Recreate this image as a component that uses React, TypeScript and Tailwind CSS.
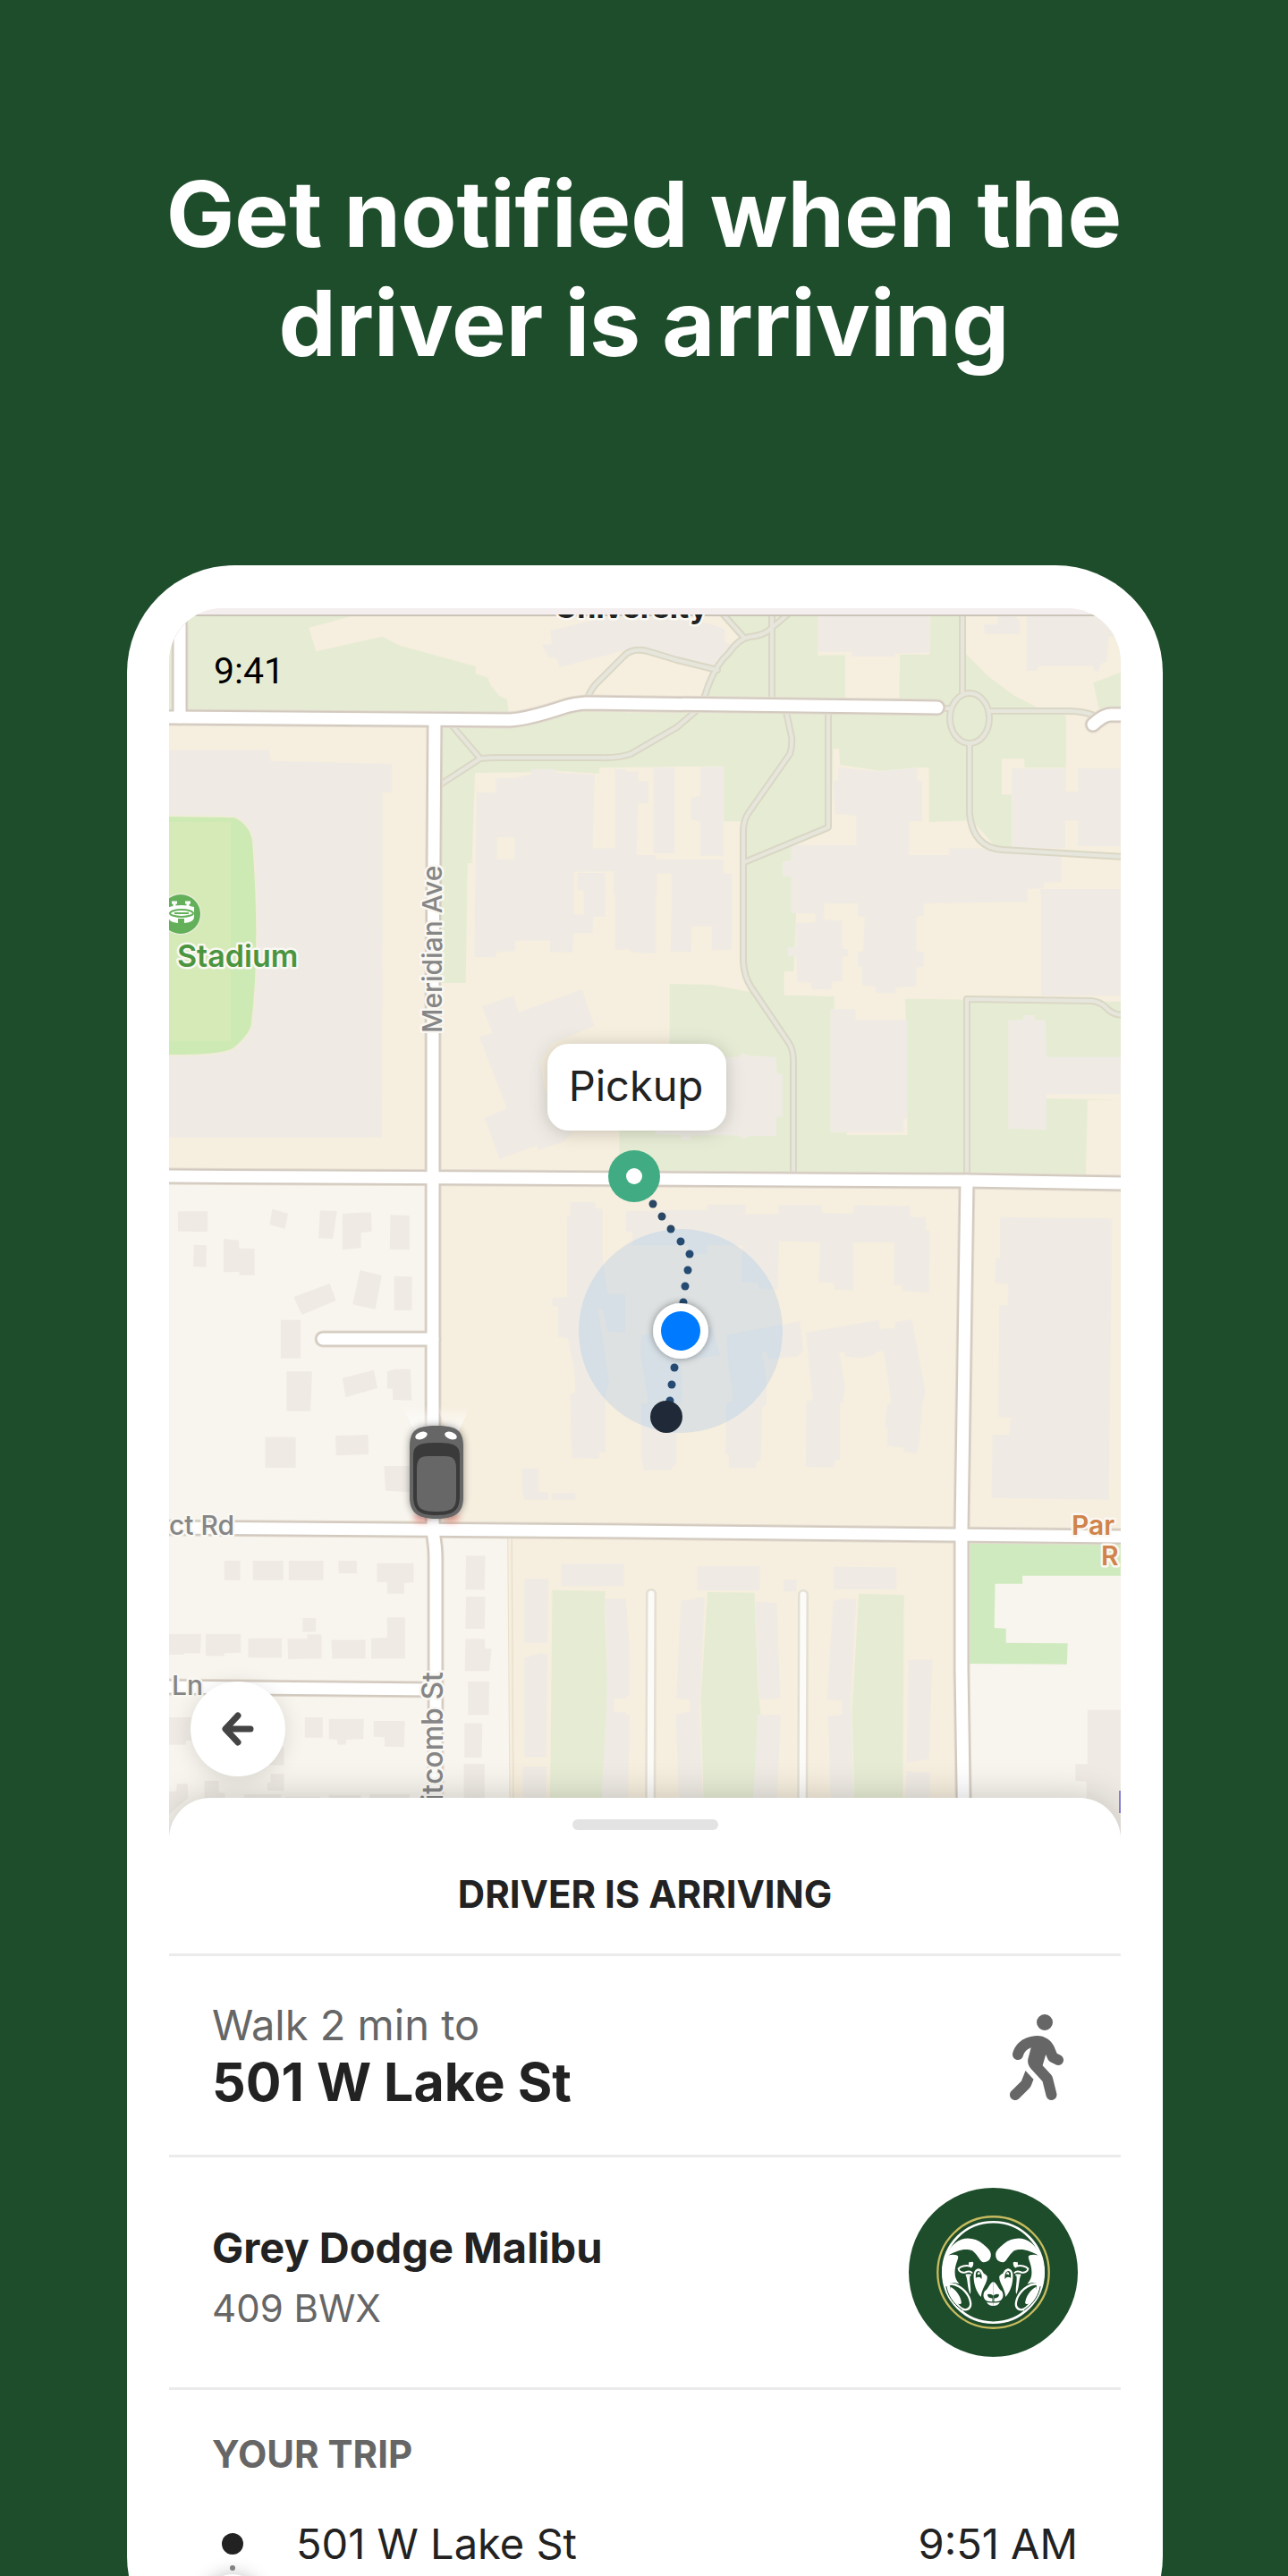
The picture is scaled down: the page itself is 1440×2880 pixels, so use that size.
import React from 'react';
import { FaPersonWalking } from 'react-icons/fa6';

const SAND = '#f6eede';
const GRASS = '#e6ecd4';
const BUILDING = '#efebe4';
const HOUSING = '#f8f5ee';
const FIELD = '#cdeab5';

interface TileProps {
  x: number;
  y: number;
  width: number;
  shapes: [string, string[]][];
}

// One map tile: 380 units high, its polygons live on a 1568x1140 grid
const Tile: React.FC<TileProps> = ({ x, y, width, shapes }) => (
  <svg x={x} y={y} width={width} height={380} viewBox="0 0 1568 1140" preserveAspectRatio="none">
    {shapes.map(([fill, list], i) => (
      <g key={i} fill={fill}>
        {list.map(points => <polygon key={points} points={points} />)}
      </g>
    ))}
  </svg>
);

const tiles: TileProps[] = [
  {
    x: 140, y: 630, width: 560,
    shapes: [
      [SAND, ['0,0 1568,0 1568,1140 0,1140']],
      [GRASS, [
        '137,170 730,170 575,215 597,295 805,245 860,275 1097,345 1097,370 1135,383 1145,410 1172,445 1195,455 1203,520 137,520',
        '990,520 1210,548 1430,480 1568,480 1568,685 1485,685 1483,705 1350,695 1270,700 1095,702 1085,1005 1072,1005 1068,1140 990,1140',
      ]],
      [BUILDING, [
        '1330,225 1568,165 1568,290 1360,348 1350,318 1325,315 1305,272 1335,270',
        '137,625 450,625 455,662 835,672 835,768 805,768 805,1140 137,1140',
        '1160,720 1215,720 1270,708 1272,690 1345,690 1350,702 1470,708 1463,955 1533,955 1533,690 1568,690 1568,1140 1095,1140 1100,768 1160,768',
      ]],
      [SAND, [
        '1163,918 1220,920 1218,992 1163,992',
        '1405,1035 1530,1032 1530,1140 1502,1140 1502,1038 1415,1038 1415,1095 1435,1097 1435,1140 1405,1140',
      ]],
    ],
  },
  {
    x: 700, y: 630, width: 600,
    shapes: [
      [SAND, ['0,0 1568,0 1568,1140 0,1140']],
      [GRASS, [
        '275,170 990,170 990,300 1060,380 1130,440 1205,485 1285,510 1285,685 1165,685 1163,655 1097,655 1097,775 1127,775 1127,955 1080,950 1010,862 885,867 885,685 850,685 740,695 625,675 622,622 605,622 600,885 483,945 485,1140 350,1140 345,865 285,865 285,680 0,683 0,500 210,500 230,450 270,350 345,260',
        '1365,400 1445,365 1445,487 1382,487',
      ]],
      [SAND, ['640,300 800,300 798,455 640,455', '560,170 888,170 886,305 560,308']],
      [BUILDING, [
        '560,170 890,170 888,298 785,303 785,312 660,312 658,296 560,296',
        '0,165 240,200 288,220 288,265 308,272 265,348 50,290 0,290',
        '1045,205 1085,205 1085,170 1130,170 1150,190 1150,237 1048,237',
        '1170,170 1445,170 1445,245 1410,245 1405,330 1388,335 1380,362 1365,360 1365,345 1205,345 1200,360 1170,360',
        '620,685 740,697 850,685 850,728 865,730 865,865 827,865 827,978 943,978 945,955 1040,955 1100,965 1272,975 1272,1068 1220,1070 1220,1088 1172,1092 1172,1140 483,1140 483,1050 457,1050 457,1000 483,995 483,945 672,945 672,845 610,840 605,730 620,727',
        '1127,687 1285,687 1285,765 1320,765 1320,687 1445,687 1445,948 1320,948 1320,863 1283,863 1283,955 1127,955',
        '1210,1092 1445,1092 1445,1140 1210,1140',
        '0,698 35,698 35,730 65,730 65,805 35,805 30,978 85,978 90,993 285,993 285,1038 310,1042 310,1140 133,1140 133,1040 90,1040 90,1140 0,1140',
        '80,685 142,685 142,972 80,972',
        '217,682 285,682 285,980 217,980 217,865 190,860 190,785 217,780',
      ]],
    ],
  },
  {
    x: 140, y: 1000, width: 560,
    shapes: [
      [SAND, ['0,0 1568,0 1568,1140 0,1140']],
      [HOUSING, ['137,955 960,955 960,1140 137,1140']],
      [GRASS, ['990,0 1070,0 1066,297 990,297', '1547,780 1568,780 1568,940 1547,940']],
      [BUILDING, [
        '137,0 805,0 803,815 137,815',
        '1095,0 1405,0 1405,65 1435,68 1435,0 1502,0 1502,75 1465,75 1463,130 1405,130 1400,195 1330,193 1330,155 1220,155 1220,190 1160,195 1160,212 1093,210',
        '1533,0 1568,0 1568,185 1533,185',
        '1117,375 1215,340 1232,395 1430,318 1468,440 1335,500 1300,560 1310,640 1330,700 1400,800 1370,830 1295,857 1288,842 1172,887 1125,750 1195,717 1108,477 1150,465',
      ]],
    ],
  },
  {
    x: 700, y: 1000, width: 600,
    shapes: [
      [SAND, ['0,0 1568,0 1568,1140 0,1140']],
      [GRASS, [
        '127,300 250,303 365,328 345,240 350,0 485,0 497,60 490,257 462,257 462,338 608,342 608,420 818,420 815,350 1445,360 1445,690 1348,690 1343,950 0,950 0,780 127,780',
      ]],
      [SAND, ['645,780 822,745 822,807 645,807', '1228,640 1445,640 1445,690 1228,684']],
      [BUILDING, [
        '0,0 87,0 87,198 20,195 0,180',
        '133,0 310,0 308,185 250,187 250,107 192,107 190,192 130,192',
        '483,0 1172,0 1172,25 870,30 870,72 848,75 848,190 870,193 870,242 848,245 848,308 790,312 785,332 730,330 728,308 690,305 690,243 677,240 677,193 693,190 697,75 677,72 677,30 580,30 578,85 630,88 632,180 648,185 648,207 632,210 632,290 602,293 600,318 543,318 540,297 500,293 497,207 472,205 472,178 497,178 497,95 553,92 553,65 483,62',
        '1213,0 1445,0 1445,340 1213,340',
        '597,385 670,385 670,420 822,420 822,750 810,755 810,797 597,797',
        '1117,422 1160,420 1160,405 1193,405 1193,420 1225,422 1228,545 1445,545 1445,668 1228,670 1228,790 1117,785',
        '85,545 330,545 335,533 360,540 438,545 440,600 457,603 457,745 438,748 438,810 360,810 345,820 328,808 190,808 185,823 160,820 160,808 85,805',
      ]],
    ],
  },
  {
    x: 140, y: 1330, width: 560,
    shapes: [
      [SAND, ['0,0 1568,0 1568,1140 0,1140']],
      [HOUSING, ['137,0 960,0 960,1140 137,1140']],
      [BUILDING, [
        '165,73 258,73 258,142 165,140', '460,65 510,80 500,132 452,118', '610,70 663,72 650,165 605,163',
        '680,80 770,76 772,140 738,145 738,195 680,202', '830,85 890,87 890,202 828,200', '215,185 255,187 253,260 213,258',
        '308,165 355,170 357,197 405,198 405,287 357,287 357,275 308,277', '735,270 803,288 783,402 712,385',
        '842,290 898,292 897,405 842,405', '527,360 640,315 660,372 553,420', '487,437 549,437 549,566 487,566',
        '505,610 585,610 580,743 505,743', '680,632 778,605 790,665 690,697',
        '820,610 845,602 893,602 897,707 838,705 838,668 820,668', '438,830 534,830 534,933 438,933',
        '658,826 760,822 762,888 660,892', '810,927 890,927 890,1015 815,1010',
        '1393,42 1470,42 1472,62 1495,65 1495,250 1510,350 1565,350 1565,480 1510,475 1495,400 1480,400 1515,650 1503,685 1503,880 1485,883 1482,903 1397,900 1393,685 1410,680 1405,600 1385,497 1355,495 1355,393 1337,390 1337,362 1383,360 1383,90 1393,88',
        '1243,935 1293,935 1293,1012 1325,1018 1325,1040 1250,1040 1243,1010', '1335,1018 1410,1018 1410,1040 1335,1040',
      ]],
    ],
  },
  {
    x: 700, y: 1330, width: 600,
    shapes: [
      [SAND, ['0,0 1568,0 1568,1140 0,1140']],
      [BUILDING, [
        '0,72 237,68 237,50 350,50 350,82 445,82 445,52 572,52 572,78 663,80 667,52 830,55 830,92 875,92 877,135 887,138 885,345 807,340 807,322 782,320 783,178 663,178 663,338 610,335 607,313 563,310 567,177 447,173 443,335 387,332 385,312 337,310 340,188 237,185 235,217 185,215 180,187 20,187 18,140 0,140',
        '45,490 100,475 250,460 275,555 160,575 165,665 160,720 148,725 147,918 130,940 52,942 45,900 45,720 65,715 42,550',
        '293,487 508,442 518,540 498,560 418,570 410,545 397,545 410,640 410,720 398,730 393,910 380,915 378,935 300,933 300,890 290,885 293,715 313,710 300,600',
        '525,480 738,437 742,468 783,465 787,445 835,435 875,680 865,720 857,850 848,885 812,880 810,865 762,860 765,800 755,795 763,720 775,715 752,540 730,545 727,555 680,565 640,558 638,543 623,545 640,660 633,715 625,718 625,905 610,910 605,932 525,930 527,710 545,705',
        '1093,92 1420,97 1410,1040 1068,1035 1070,822 1120,822 1123,765 1088,763 1090,388 1115,388 1117,317 1078,313 1080,230 1093,228',
      ]],
    ],
  },
  {
    x: 140, y: 1700, width: 560,
    shapes: [
      [SAND, ['0,0 1568,0 1568,1140 0,1140']],
      [HOUSING, ['137,30 1206,30 1212,1140 137,1140']],
      ['#e9dfcd', ['1196,50 1212,50 1218,1140 1204,1140']],
      [SAND, ['1199,50 1208,50 1214,1140 1207,1140']],
      [GRASS, ['1337,233 1502,237 1500,300 1510,550 1490,1140 1328,1140']],
      [BUILDING, [
        '310,135 360,135 360,200 310,200', '400,135 495,135 495,200 400,200', '512,135 620,135 620,200 512,200',
        '668,135 725,135 725,177 668,177', '788,143 903,143 903,207 873,210 873,245 820,245 820,207 788,207',
        '555,327 597,327 597,373 555,373', '820,325 876,325 876,463 770,463 770,395 820,392',
        '137,380 238,380 235,445 185,445 185,450 137,450', '252,380 362,380 362,443 310,445 310,455 252,453',
        '385,395 490,395 490,460 385,460', '508,397 570,397 570,382 615,382 615,463 510,465',
        '645,400 752,400 752,463 648,463', '562,660 618,660 618,728 562,728',
        '638,665 747,665 745,733 692,735 690,752 665,752 663,735 638,733', '778,672 875,672 873,760 812,758 812,727 778,725',
        '137,660 240,660 240,738 190,738 190,752 137,752', '450,760 497,760 497,820 450,820', '455,850 497,850 497,907 445,905 445,880 455,878',
        '137,908 160,908 162,883 195,883 197,930 137,985', '248,873 293,873 293,910 312,915 312,960 248,960',
        '372,918 488,918 488,960 372,960', '500,926 610,926 610,960 500,960', '638,920 738,920 738,960 638,960', '765,918 890,918 890,960 765,960',
        '1067,118 1127,118 1125,232 1065,232', '1067,255 1127,255 1125,363 1065,363', '1065,397 1125,397 1127,430 1147,430 1140,505 1063,505',
        '1073,540 1140,540 1138,652 1073,652', '1062,680 1118,680 1116,795 1062,795', '1060,817 1125,817 1125,960 1060,960',
        '1365,145 1562,145 1562,220 1365,220', '1250,195 1325,195 1322,410 1250,410', '1250,460 1300,445 1322,450 1318,795 1250,795',
        '1245,825 1318,825 1318,960 1245,960', '1500,262 1568,262 1568,960 1490,960 1508,600 1508,440',
      ]],
      [SAND, ['1530,597 1568,597 1568,643 1530,643']],
    ],
  },
  {
    x: 700, y: 1700, width: 600,
    shapes: [
      [SAND, ['0,0 1568,0 1568,1140 0,1140']],
      [HOUSING, ['980,50 1568,50 1568,1140 985,1140']],
      [GRASS, ['238,240 375,242 385,560 393,650 368,960 227,960 218,600', '680,245 812,250 808,960 668,960 660,640']],
      [BUILDING, [
        '208,152 392,152 390,235 208,235', '607,155 790,157 790,232 607,230', '460,198 498,198 498,238 460,238',
        '160,268 200,265 203,258 230,258 222,450 215,650 225,960 155,960 145,650 188,640 185,600 147,597', '378,272 440,275 450,597 388,600',
        '385,652 452,652 440,960 370,960', '605,270 635,262 672,265 657,600 665,960 598,960 590,655 630,650 630,605 587,600',
        '825,467 895,467 885,800 820,812', '820,840 888,845 888,960 815,960', '0,265 8,400 10,590 0,590', '0,650 10,650 5,960 0,960',
        '1348,635 1445,635 1445,1140 1348,1140 1345,875 1313,873 1313,817 1348,817',
      ]],
      ['#d0eabf', [
        '990,70 1445,78 1445,185 1158,185 1158,212 1078,212 1076,360 1110,362 1110,410 1290,412 1288,482 990,480',
      ]],
    ],
  },
];

const footpaths = [
  'M506 812L537 848M494 876L537 848Q548 847 560 847H670Q690 848 705 843L757 813L778 795L788 778Q798 745 815 730Q826 714 838 712Q850 711 858 706L884 684',
  'M806 684L832 713',
  'M863 684V784',
  'M657 780Q662 768 669 762L697 734Q706 724 724 728L757 738L802 749',
  'M879 796L885 824Q886 834 883 843L836 910Q831 918 831 930V1075Q832 1092 840 1104L882 1166Q887 1174 887 1186V1312',
  'M926 796V925L832 964',
  'M1076 684V775M1050 792H1062M1107 795H1195Q1212 795 1226 801',
  'M1084 832V910Q1088 948 1121 950L1256 958',
  'M1081 1314V1117L1220 1119Q1230 1120 1236 1126Q1244 1135 1256 1135',
];

const streets = [
  'M201 680V802',
  'M180 802L570 805Q590 804 632 790Q642 787 655 786L1048 791',
  'M486 805L484 1100V1712Q487 1730 487 1742V2060',
  'M180 1315L1081 1320L1260 1323',
  'M1081 1320L1075 1710V1867L1078 2060',
  'M361 1497H484',
  'M180 1708L700 1712L1260 1718',
  'M180 1886L484 1889',
  'M1222 810Q1234 799 1242 799H1260',
];

const lanes = ['M728 1782L727 2060', 'M898 1783L897 2060'];

const walkDots = [
  [730, 1346], [740, 1360], [750, 1374], [761, 1388], [771, 1402], [769, 1420],
  [766, 1438], [764, 1456], [754, 1529], [751, 1548], [749, 1566],
];

const Strokes: React.FC<{ paths: string[]; color: string; width: number }> = ({ paths, color, width }) => (
  <g fill="none" stroke={color} strokeWidth={width} strokeLinecap="round" strokeLinejoin="round">
    {paths.map(d => <path key={d} d={d} />)}
  </g>
);

const Car: React.FC = () => (
  <g>
    <path d="M449 1571L464 1601L476 1597L487 1571Z" fill="url(#beam)" />
    <path d="M527 1571L512 1601L498 1597L488 1571Z" fill="url(#beam)" />
    <g filter="url(#glow)" fill="#f0625a" opacity="0.4">
      <ellipse cx="471" cy="1697" rx="9" ry="6" />
      <ellipse cx="505" cy="1697" rx="9" ry="6" />
    </g>
    <path d="M458 1618C458 1600 464 1594 488 1594S518 1600 518 1618V1674C518 1692 508 1698 488 1698S458 1692 458 1674Z" fill="#666" filter="url(#carShadow)" />
    <path d="M462 1628C462 1616 468 1613 488 1613S514 1616 514 1628V1672C514 1690 506 1694 488 1694S462 1690 462 1672Z" fill="#3a3a3a" />
    <path d="M466 1642C466 1631 470 1628 478 1628H498C506 1628 510 1631 510 1642V1674C510 1687 504 1690 488 1690S466 1687 466 1674Z" fill="#676767" />
    <ellipse cx="471" cy="1605" rx="7" ry="4" transform="rotate(-20 471 1605)" fill="#fff" />
    <ellipse cx="504" cy="1605" rx="7" ry="4" transform="rotate(20 504 1605)" fill="#fff" />
  </g>
);

const CampusMap: React.FC = () => (
  <svg className="block w-full" viewBox="189 680 1064 1376" fontFamily="Inter, sans-serif" role="img" aria-label="Map">
    <defs>
      <linearGradient id="beam" x1="0" y1="1" x2="0" y2="0">
        <stop offset="0" stopColor="#fff" stopOpacity="0.9" />
        <stop offset="1" stopColor="#fff" stopOpacity="0" />
      </linearGradient>
      <filter id="glow" x="-50%" y="-100%" width="200%" height="300%"><feGaussianBlur stdDeviation="3" /></filter>
      <filter id="carShadow" x="-50%" y="-50%" width="200%" height="200%">
        <feDropShadow dx="0" dy="0" stdDeviation="4" floodOpacity="0.4" />
      </filter>
      <filter id="cardShadow" x="-50%" y="-50%" width="200%" height="200%">
        <feDropShadow dx="0" dy="2" stdDeviation="10" floodOpacity="0.2" />
      </filter>
    </defs>

    {tiles.map(tile => <Tile key={`${tile.x}-${tile.y}`} {...tile} />)}

    {/* Playing field */}
    <path d="M185 912L262 913Q280 921 283 940Q292 1060 282 1143Q282 1155 262 1172Q250 1181 185 1180Z" fill={FIELD} stroke="#f1ecd9" strokeWidth="2" />
    <path d="M185 919H258V1164H185Z" fill="#d6eab8" />

    {/* Streets */}
    <Strokes paths={footpaths} color="#dad7c5" width={8} />
    <ellipse cx="1084" cy="803" rx="22" ry="28" fill="none" stroke="#dad7c5" strokeWidth="8" />
    <Strokes paths={footpaths} color="#e7e6dc" width={4} />
    <ellipse cx="1084" cy="803" rx="22" ry="28" fill="none" stroke="#e7e6dc" strokeWidth="4" />
    <Strokes paths={lanes} color="#e3dfd3" width={12} />
    <Strokes paths={lanes} color="#fcfbf8" width={7} />
    <Strokes paths={streets} color="#e2dacf" width={19} />
    <Strokes paths={streets} color="#d3cabf" width={17} />
    <Strokes paths={streets} color="#fff" width={13} />

    {/* Labels */}
    <rect x="189" y="687" width="1064" height="2" fill="#c9c3b8" />
    <g stroke="#faf8f3" strokeWidth="5" strokeLinejoin="round" paintOrder="stroke" fontSize="30" fontWeight="500" fill="#868686">
      <text x="198" y="1081" fill="#4b9540" fontSize="34" fontWeight="600">Stadium</text>
      <text transform="translate(494 1155) rotate(-90)">Meridian Ave</text>
      <text transform="translate(495 1869) rotate(-90)" textAnchor="end" fontSize="32">Whitcomb St</text>
      <text x="189" y="1716">ct Rd</text>
      <text x="192" y="1895">Ln</text>
      <text x="1198" y="1716" fill="#d0834a" fontWeight="600">Par</text>
      <text x="1231" y="1750" fill="#d0834a" fontWeight="600">R</text>
      <text x="706" y="691" textAnchor="middle" fill="#222" fontSize="34" fontWeight="700">University</text>
    </g>
    <rect x="189" y="680" width="1064" height="7" fill="#f4eeee" />
    <rect x="1251" y="2002" width="2" height="25" fill="#8a84d8" />
    <circle cx="202" cy="1022" r="23" fill="#f3f0e6" />
    <circle cx="202" cy="1022" r="22" fill="#64b05a" />
    <path d="M189 1014Q203 1010 217 1014V1025Q217 1031 206 1032V1027H199V1032Q189 1031 189 1027Z" fill="#fff" />
    <path d="M192 1009H198M207 1009H213M195 1009V1015M210 1009V1015" stroke="#fff" strokeWidth="3" />
    <ellipse cx="203" cy="1021" rx="13" ry="4" fill="none" stroke="#64b05a" strokeWidth="2" />
    <path d="M195 1021H211" stroke="#64b05a" strokeWidth="2" />

    {/* Walking route */}
    <g fill="#2b4763">
      {walkDots.map(([cx, cy]) => <circle key={cy} cx={cx} cy={cy} r="4.5" />)}
    </g>
    <circle cx="761" cy="1488" r="114" fill="#007aff" opacity="0.1" />
    <circle cx="761" cy="1488" r="31" fill="#fff" filter="url(#carShadow)" />
    <circle cx="761" cy="1488" r="22" fill="#007aff" />
    <circle cx="745" cy="1584" r="18" fill="#1f2937" />
    <circle cx="709" cy="1315" r="29" fill="#41ac83" />
    <circle cx="709" cy="1315" r="9" fill="#fff" />
    <rect x="612" y="1167" width="200" height="97" rx="24" fill="#fff" filter="url(#cardShadow)" />
    <text x="711" y="1231" textAnchor="middle" fontSize="47" fill="#222">Pickup</text>

    <Car />
  </svg>
);

const RamHalf: React.FC = () => (
  <g>
    <path d="M268 925C292 905 330 905 360 930C373 942 386 950 386 966C386 983 375 992 360 991C350 990 345 970 325 953C300 943 275 950 243 968C255 964 275 965 276 972C276 985 265 1000 265 1025C265 1045 272 1055 280 1064C262 1056 243 1058 244 1070C246 1085 262 1115 290 1150L295 1160C250 1130 222 1075 222 1022C222 985 242 945 268 925Z" fill="#fff" />
    <path d="M244 1066C262 1058 298 1078 312 1108C322 1132 320 1148 300 1151C278 1148 248 1105 244 1066Z" fill="#1e4d2b" stroke="#fff" strokeWidth="7" />
    <path d="M250 1074C268 1082 286 1108 287 1128C284 1135 275 1131 270 1127C258 1116 248 1096 250 1074Z" fill="#fff" />
    <path d="M236 1072C240 1100 258 1130 290 1152" fill="none" stroke="#1e4d2b" strokeWidth="3" />
    <path d="M314 1004C302 1000 284 1005 277 1013C278 1022 288 1027 300 1025C312 1020 318 1022 322 1026M304 1034L317 1034" fill="none" stroke="#fff" strokeWidth="6" strokeLinecap="round" />
    <path d="M313 990C318 994 322 986 327 992C328 1000 324 1010 318 1010C312 1006 309 998 313 990Z" fill="#fff" />
    <path d="M302 1036C309 1050 306 1075 317 1099C321 1080 313 1055 316 1036Z" fill="#fff" />
    <path d="M328 1036C328 1014 346 1004 357 1020C360 1031 372 1032 374 1040C374 1062 354 1080 353 1108C336 1088 328 1064 328 1036Z" fill="#fff" />
    <path d="M335 1034C334 1018 348 1016 353 1028C356 1036 356 1042 354 1048C350 1038 342 1040 335 1044Z" fill="#1e4d2b" />
    <path d="M341 1028C345 1022 350 1024 351 1032Q346 1030 341 1034Z" fill="#fff" />
    <path d="M394 1057C384 1057 378 1080 366 1087C357 1098 360 1118 376 1122Q386 1124 394 1123Z" fill="#fff" />
    <path d="M374 1100Q384 1095 394 1103V1123H391V1112Q376 1112 374 1100Z" fill="#1e4d2b" />
    <path d="M372 1126Q384 1128 394 1127V1138Q378 1138 372 1126Z" fill="#fff" />
  </g>
);

const RamLogo: React.FC = () => (
  <svg className="h-[189px] w-[189px]" viewBox="110 741 568 568" role="img" aria-label="Rams">
    <circle cx="394" cy="1025" r="284" fill="#1e4d2b" />
    <circle cx="394" cy="1025" r="187" fill="none" stroke="#c8bb5f" strokeWidth="7" />
    <circle cx="394" cy="1025" r="169" fill="none" stroke="#fff" strokeWidth="8" />
    <RamHalf />
    <g transform="translate(788 0) scale(-1 1)"><RamHalf /></g>
  </svg>
);

const App: React.FC = () => {
  return (
    <main className="h-screen overflow-hidden bg-[#1e4d2b] pt-[178px] font-['Inter',sans-serif] text-[#222]">
      <h1 className="text-center text-[102px] leading-[122px] font-bold text-white">
        Get notified when the<br />driver is arriving
      </h1>

      <div className="mt-[210px] mr-[140px] ml-[142px] rounded-[120px] bg-white px-[47px] pt-12 pb-9">
        <div className="relative overflow-hidden rounded-t-[60px]">
          <CampusMap />
          <time className="absolute top-[46px] left-[50px] font-['Roboto',sans-serif] text-[41px] leading-[48px] text-black">9:41</time>

          <section className="relative -mt-[46px] rounded-t-[46px] bg-white shadow-[0_0_40px_rgba(0,0,0,0.2)]">
            <button
              type="button"
              aria-label="Back"
              className="absolute -top-[130px] left-6 flex h-[106px] w-[106px] items-center justify-center rounded-full bg-white shadow-[0_4px_24px_rgba(0,0,0,0.12)]"
            >
              <svg width="36" height="38" viewBox="0 0 36 38" fill="none" stroke="#444" strokeWidth="7" strokeLinecap="round" strokeLinejoin="round">
                <path d="M18 4L4 19L18 34M5 19H32" />
              </svg>
            </button>

            <div className="flex h-[174px] flex-col items-center pt-6">
              <div className="h-3 w-[163px] rounded-full bg-[#e3e3e3]" />
              <h2 className="mt-12 text-[42px] leading-[48px] font-bold">DRIVER IS ARRIVING</h2>
            </div>

            <div className="flex items-center justify-between border-t-3 border-[#ebebeb] px-12 py-[47px]">
              <div>
                <p className="text-[47px] leading-[60px] text-[#666]">Walk 2 min to</p>
                <p className="text-[59px] leading-[68px] font-bold">501 W Lake St</p>
              </div>
              <FaPersonWalking className="mt-1 mr-4 h-[96px] w-[60px] text-[#666]" />
            </div>

            <div className="flex items-center justify-between border-t-3 border-[#ebebeb] px-12 py-[34px]">
              <div className="pt-3">
                <p className="text-[47px] leading-[68px] font-bold">Grey Dodge Malibu</p>
                <p className="text-[42px] leading-[68px] text-[#666]">409 BWX</p>
              </div>
              <RamLogo />
            </div>

            <div className="border-t-3 border-[#ebebeb] px-12 pt-12">
              <h3 className="text-[42px] leading-[48px] font-bold text-[#666]">YOUR TRIP</h3>
              <div className="mt-[42px] flex items-start justify-between text-[47px] leading-[68px]">
                <div className="flex">
                  <div className="flex w-[94px] flex-col items-start gap-3 pt-[22px] pl-[11px]">
                    <span className="h-6 w-6 rounded-full bg-[#222]" />
                    <span className="ml-[9px] h-[6px] w-[6px] rounded-full bg-[#888]" />
                    <span className="-mt-2 -ml-5 h-16 w-16 rounded-full bg-white shadow-[0_0_20px_rgba(0,0,0,0.25)]" />
                  </div>
                  <p>501 W Lake St</p>
                </div>
                <p>9:51 AM</p>
              </div>
            </div>
          </section>
        </div>
      </div>
    </main>
  );
};

export default App;
